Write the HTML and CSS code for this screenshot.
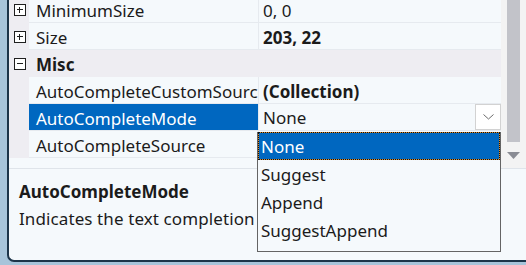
FILE: index.html
```html
<!DOCTYPE html>
<html lang="en">
<head>
    <meta charset="UTF-8">
    <title>Properties</title>
    <link rel="stylesheet" href="styles.css">
</head>
<body>
    <div class="window">
        <div class="top">
            <div class="grid">
                <div class="row">
                    <div class="gutter"><span class="toggle plus"></span></div>
                    <div class="name">MinimumSize</div>
                    <div class="value">0, 0</div>
                </div>
                <div class="row">
                    <div class="gutter"><span class="toggle plus"></span></div>
                    <div class="name">Size</div>
                    <div class="value bold">203, 22</div>
                </div>
                <div class="row category">
                    <div class="gutter"><span class="toggle"></span></div>
                    <div class="name bold">Misc</div>
                    <div class="value"></div>
                </div>
                <div class="row">
                    <div class="gutter"></div>
                    <div class="name">AutoCompleteCustomSource</div>
                    <div class="value bold">(Collection)</div>
                </div>
                <div class="row">
                    <div class="gutter"></div>
                    <div class="name selected">AutoCompleteMode</div>
                    <div class="value editing">
                        <span>None</span>
                        <span class="drop-btn">
                            <svg width="11" height="6" viewBox="0 0 11 6"><path d="M0.5 0.5 L5.5 5 L10.5 0.5" fill="none" stroke="#6b6b6b" stroke-width="1"/></svg>
                        </span>
                    </div>
                </div>
                <div class="row">
                    <div class="gutter"></div>
                    <div class="name">AutoCompleteSource</div>
                    <div class="value"></div>
                </div>
            </div>
            <div class="scrollbar">
                <div class="thumb"></div>
                <svg class="arrow" width="13" height="7" viewBox="0 0 13 7"><path d="M0 0 H13 L6.5 7 Z" fill="#8a8c94"/></svg>
            </div>
        </div>
        <div class="desc">
            <h3>AutoCompleteMode</h3>
            <p>Indicates the text completion behavior of the combo box.</p>
        </div>
        <ul class="dropdown">
            <li class="active">None</li>
            <li>Suggest</li>
            <li>Append</li>
            <li>SuggestAppend</li>
        </ul>
    </div>
</body>
</html>
```

FILE: styles.css
```css
body {
    margin: 0;
    padding: 0;
    background-color: #a7c4da;
    font-family: 'Noto Sans', sans-serif;
    font-size: 17px;
    color: #1b1b1b;
    overflow: hidden;
}

.window {
    position: relative;
    margin-left: 7px;
    height: 260px;
    background-color: #f5f9fc;
    border-left: 2px solid #1c3449;
    border-bottom: 2px solid #1c3449;
    border-bottom-left-radius: 7px;
    overflow: hidden;
}

.top {
    display: flex;
    height: 168px;
    border-bottom: 1px solid #dfe4ea;
}

.grid {
    flex: 1;
    margin-top: -4px;
}

.row {
    display: grid;
    grid-template-columns: 20px 229px 1fr;
    height: 27px;
}

.gutter {
    background-color: #eeedf2;
    display: flex;
    align-items: center;
    padding-left: 5px;
}

.toggle {
    position: relative;
    width: 10px;
    height: 10px;
    border: 1px solid #1f1f1f;
    background: #fff;
}

.toggle::before {
    content: '';
    position: absolute;
    left: 2px;
    top: 4px;
    width: 6px;
    height: 1px;
    background: #1f1f1f;
}

.toggle.plus::after {
    content: '';
    position: absolute;
    left: 4px;
    top: 2px;
    width: 1px;
    height: 6px;
    background: #1f1f1f;
}

.name,
.value {
    height: 27px;
    line-height: 25px;
    padding-top: 2px;
    box-sizing: border-box;
    border-bottom: 1px solid #e6eaef;
    white-space: nowrap;
    overflow: hidden;
}

.name {
    padding-left: 7px;
}

.value {
    padding-left: 4px;
    border-left: 1px solid #e6eaef;
}

.bold {
    font-weight: bold;
}

.category .name,
.category .value {
    background-color: #eeedf2;
    border-color: #eeedf2;
}

.selected {
    background-color: #0067c0;
    color: #fff;
}

.editing {
    display: flex;
    justify-content: space-between;
    padding-top: 0;
    line-height: 27px;
    overflow: visible;
}

.drop-btn {
    display: flex;
    align-items: center;
    justify-content: center;
    width: 24px;
    height: 24px;
    background: #fff;
    border: 1px solid #d2d2d2;
}

.scrollbar {
    width: 25px;
    background-color: #f3f3f3;
    display: flex;
    flex-direction: column;
    align-items: center;
}

.thumb {
    width: 13px;
    height: 142px;
    background-color: #c2c3c9;
}

.arrow {
    margin-top: 10px;
}

.desc {
    padding: 9px 10px 0;
}

.desc h3 {
    margin: 0;
    font-size: 17px;
    line-height: 27px;
}

.desc p {
    margin: 0;
    line-height: 27px;
    letter-spacing: 0.1px;
    white-space: nowrap;
}

.dropdown {
    position: absolute;
    left: 248px;
    top: 132px;
    width: 242px;
    margin: 0;
    padding: 0 0 7px;
    list-style: none;
    background-color: #f5f9fc;
    border: 1px solid #646464;
    border-top: none;
}

.dropdown li {
    height: 28px;
    line-height: 27px;
    padding-top: 1px;
    padding-left: 3px;
    box-sizing: border-box;
}

.dropdown li.active {
    background-color: #0067c0;
    color: #fff;
    box-shadow: inset 0 0 0 1px #d8892a;
    outline: 1px dotted #111;
    outline-offset: -1px;
}
```
